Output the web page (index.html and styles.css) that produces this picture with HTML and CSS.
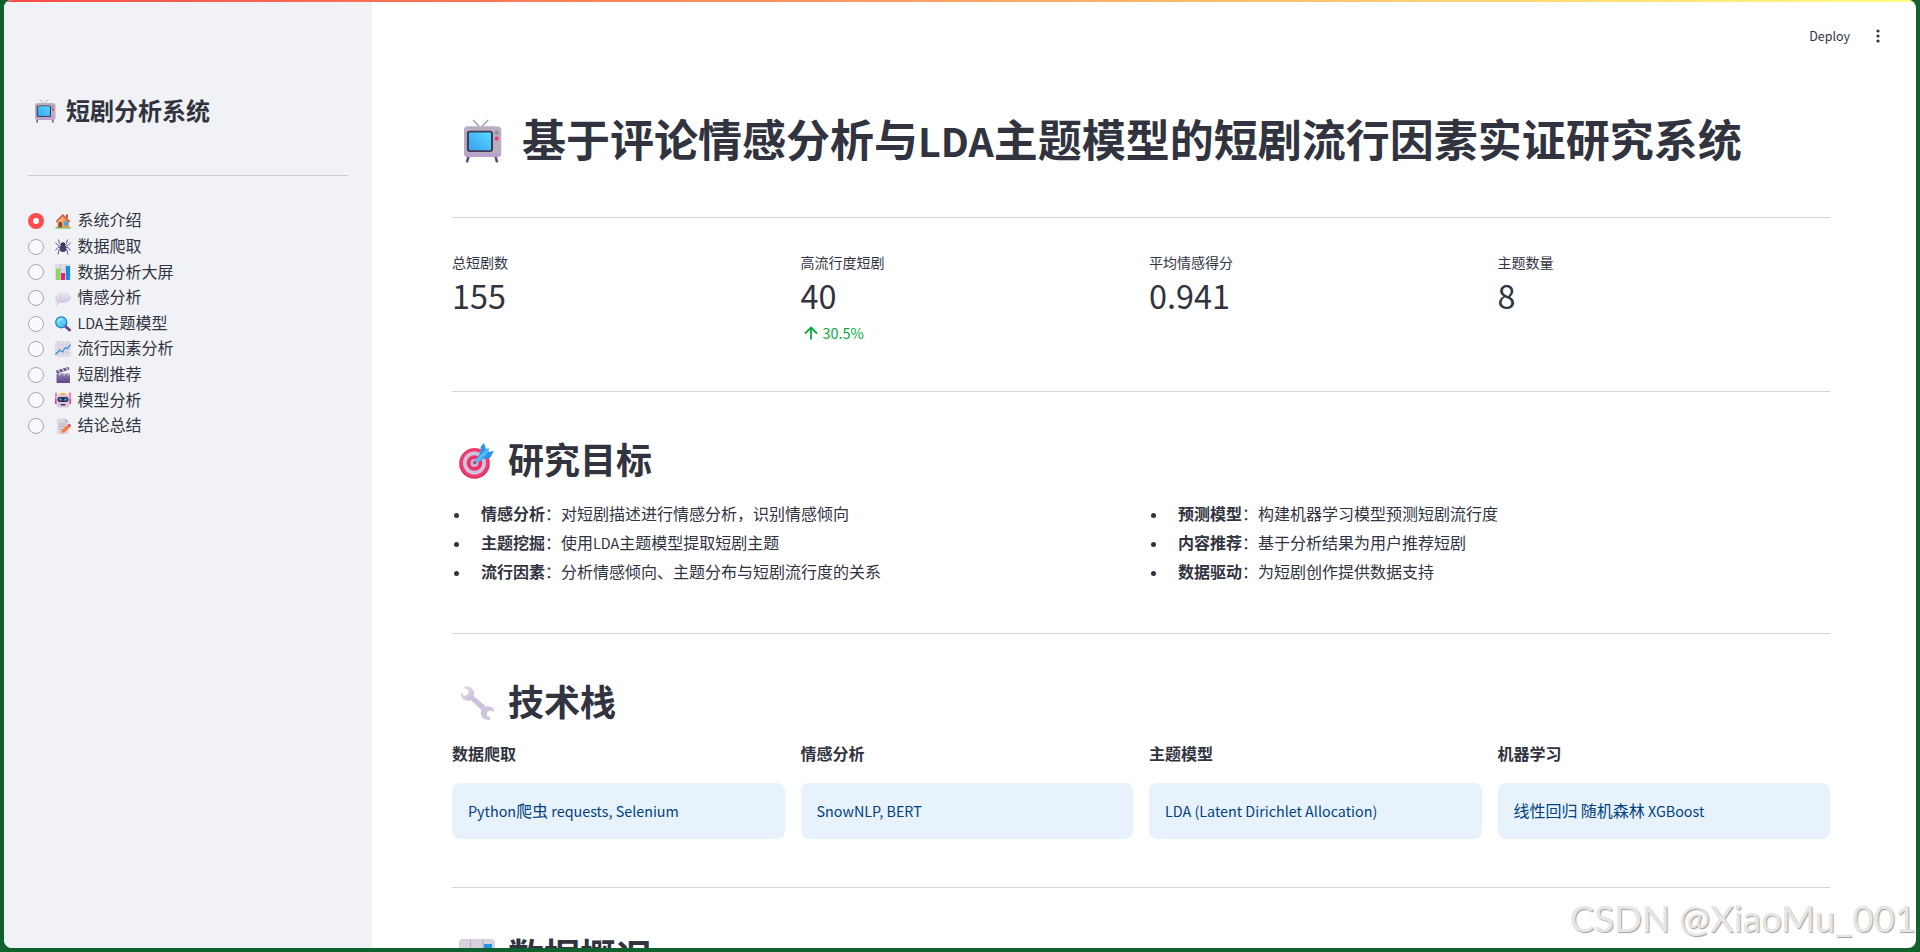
FILE: index.html
```html
<!DOCTYPE html>
<html lang="zh-CN">
<head>
<meta charset="utf-8">
<title>短剧分析系统</title>
<link rel="stylesheet" href="styles.css">
</head>
<body>
<svg class="defs" width="0" height="0" aria-hidden="true">
  <defs>
    <linearGradient id="screen" x1="0" y1="1" x2="1" y2="0"><stop offset="0" stop-color="#3a9df2"/><stop offset="1" stop-color="#55dcff"/></linearGradient>
    <linearGradient id="wrenchFill" x1="0" y1="0" x2="1" y2="1"><stop offset="0" stop-color="#e3dfe6"/><stop offset=".4" stop-color="#cbbbe0"/><stop offset="1" stop-color="#d3cdd9"/></linearGradient>
    <linearGradient id="bubble" x1="0" y1="0" x2="0" y2="1"><stop offset="0" stop-color="#eeeaf1"/><stop offset="1" stop-color="#d3c5e2"/></linearGradient>
    <linearGradient id="lens" x1="0" y1="0" x2="1" y2="1"><stop offset="0" stop-color="#8be8ff"/><stop offset="1" stop-color="#35b8ef"/></linearGradient>
    <linearGradient id="clap" x1="0" y1="0" x2="0" y2="1"><stop offset="0" stop-color="#8e7aaa"/><stop offset="1" stop-color="#5d4a8a"/></linearGradient>
    <symbol id="tv" viewBox="0 0 32 32">
      <path d="M9.500 .8 14.500 6M20.500 .8 15.500 6" fill="none" stroke="#a19ca6" stroke-width="1"/>
      <path d="M6.500 26 5 31.500M25.500 26 27 31.500" fill="none" stroke="#5f4680" stroke-width="1.800"/>
      <rect x="3" y="5.500" width="24.500" height="22" rx="2.500" fill="#b8adc1"/>
      <rect x="3" y="5.500" width="27" height="22" rx="2.500" fill="#b8adc1"/>
      <path d="M3.500 25h26v1q0 1.500-2 1.500H5.500q-2 0-2-1.500z" fill="#bd9fd0"/>
      <rect x="5" y="8.500" width="19" height="15.500" rx="2" fill="#433b52"/>
      <rect x="6.500" y="9.800" width="16" height="13" rx=".8" fill="url(#screen)"/>
      <circle cx="26.700" cy="10" r="1.400" fill="#958a9e"/><circle cx="26.700" cy="14.200" r="1.400" fill="#f8306c"/>
    </symbol>
    <symbol id="house" viewBox="0 0 32 32">
      <path d="M1 28h30v3H1z" fill="#65ba43"/><path d="M4 15 16 6l12 9v14H4z" fill="#f2b37d"/><path d="M16 13h12v16H16z" fill="#e3985e"/>
      <path d="M22 3h4v7h-4z" fill="#c0523c"/><path d="M1 17 14 3q1.500-1.500 3 0l14 14-3 2-13-12L3 19z" fill="#d8623e"/>
      <path d="M7 18h7v11H7z" fill="#8a4935"/><path d="M18 17h8v8h-8z" fill="#3da7e6"/>
    </symbol>
    <symbol id="spider" viewBox="0 0 32 32">
      <g fill="none" stroke="#4b3b64" stroke-width="1.700" stroke-linejoin="round"><path d="M14 14 9 9 7 1M18 14l5-5 2-8M13 15 6 13 1 7M19 15l7-2 5-6M13 18 6 17 1 23M19 18l7-1 5 6M14 20 8 22 6 31M18 20l6 2 2 9"/></g>
      <circle cx="16" cy="11" r="4.500" fill="#3e2d59"/><ellipse cx="16" cy="19" rx="6.500" ry="7" fill="#4c3970"/>
    </symbol>
    <symbol id="bars" viewBox="0 0 32 32">
      <rect x="0" y="0" width="32" height="32" rx="3" fill="#e1dce6"/><path d="M11 0v32M21 0v32M0 11h32M0 21h32" stroke="#bbb1c3"/>
      <path d="M2 9h8v23H2z" fill="#88d85c"/><path d="M12 18h8v14h-8z" fill="#e4236c"/><path d="M22 4h8v28h-8z" fill="#188de0"/>
    </symbol>
    <symbol id="thought" viewBox="0 0 32 32">
      <path d="M7 24q-7 0-7-7 0-4 4-6 0-6 6-7 4-4 9-1 7-1 9 5 5 3 4 8-1 6-7 7-3 4-8 2-5 2-10-1z" fill="url(#bubble)"/><circle cx="6" cy="26" r="2.500" fill="#d6c9e3"/><circle cx="2.500" cy="29.500" r="1.500" fill="#d0c0df"/>
    </symbol>
    <symbol id="magnifier" viewBox="0 0 32 32">
      <path d="m20 20 9 8" stroke="#754084" stroke-width="6" stroke-linecap="round"/><circle cx="12.500" cy="12.500" r="11" fill="url(#lens)" stroke="#247bbd" stroke-width="2.500"/><path d="M6.500 11q2-5 7-5" fill="none" stroke="#c5f7ff" stroke-width="2"/>
    </symbol>
    <symbol id="trend" viewBox="0 0 32 32">
      <rect x="0" y="0" width="32" height="32" rx="3" fill="#e5deeb"/><path d="M8 0v32M16 0v32M24 0v32M0 8h32M0 16h32M0 24h32" stroke="#c4b8cf"/><path d="m1 27 8-9 6 4 6-9 4 2 6-8" fill="none" stroke="#258ddb" stroke-width="2.500"/>
    </symbol>
    <symbol id="clapper" viewBox="0 0 32 32">
      <path d="M3 13h27v17q0 2-2 2H5q-2 0-2-2z" fill="url(#clap)"/><path d="M2 7 27 0l2 5L4 13z" fill="#625078"/><path d="m6 6 4 4M14 4l4 4M22 2l4 4M8 17l4-4M17 17l4-4M26 17l3-4" stroke="#d8cce2" stroke-width="2.500"/><path d="M3 18h27" stroke="#8974ac"/>
    </symbol>
    <symbol id="robot" viewBox="0 0 32 32">
      <path d="M2 1v19M30 1v19" stroke="#ef4776" stroke-width="2.500"/><path d="M0 14h4v10H0zM28 14h4v10h-4z" fill="#e03a74"/>
      <rect x="3" y="4" width="26" height="27" rx="6" fill="#d8c8df"/><path d="M11 2h10l-1 4h-8z" fill="#f5b52e"/><rect x="5" y="10" width="22" height="10" rx="5" fill="#342b4d"/><circle cx="11" cy="15" r="2.500" fill="#31abe4"/><circle cx="21" cy="15" r="2.500" fill="#31abe4"/><rect x="11" y="24" width="10" height="3" rx="1.500" fill="#453556"/>
    </symbol>
    <symbol id="memo" viewBox="0 0 32 32">
      <path d="M4 1h16l7 7v24H4z" fill="#ddd5e1"/><path d="M20 1v7h7z" fill="#b9adbf"/><path d="M8 12h14M8 17h14M8 22h9" stroke="#a69bad" stroke-width="1.500"/>
      <path d="m12 26 13-12 5 5-13 11-6 1z" fill="#fa793c"/><path d="m25 14 2-2q1-1 2 0l3 3-2 4z" fill="#e93e59"/><path d="m12 26 5 4-6 1z" fill="#f5c397"/>
    </symbol>
    <symbol id="target" viewBox="0 0 36 36">
      <circle cx="15.500" cy="20.500" r="15.300" fill="#e02f5e"/><circle cx="15.500" cy="19.800" r="14.500" fill="#ed3d71"/><circle cx="15.500" cy="20" r="11.500" fill="#d2c3dc"/><circle cx="15.500" cy="20" r="7.800" fill="#ed326d"/><circle cx="15.500" cy="20" r="4" fill="#c8b5d1"/><circle cx="15.800" cy="19.500" r="1.800" fill="#766181"/>
      <path d="m16 19 7-7" stroke="#8a7d99" stroke-width="1.500"/><path d="m18 15 3-5 1-7 3-3 2 6 3-1-1 4 6-1-4 7-7 1-4 3z" fill="#3095e8"/><path d="m18 15 10-9 2 2-8 9q-3 3-5 1-1-1 1-3z" fill="#4fc0f5"/>
    </symbol>
    <symbol id="wrench" viewBox="0 0 36 36">
      <path d="M2 7q-1 6 4 8 3 1.500 6 .3L22.500 25q-1.500 4 .5 7 2.500 3.500 8 3l.5-2.500-3.500-2 .3-3.500 3-1.500 3.200 1.500 .5-3q-3.500-3.500-8-2.500L14.500 11q1.500-4-1-7-3-3.500-8-2.500L5 2.500l4.500 3-.5 4-3.500 1.500z" fill="url(#wrenchFill)"/>
    </symbol>
    <symbol id="dashboard" viewBox="0 0 36 36">
      <rect width="36" height="36" rx="4" fill="#d8d1df"/><path d="M11.500 0v36M24 0v36M0 12h36M0 24h36" stroke="#b6aabc"/><path d="M3 13h7v20H3z" fill="#88d85c"/><path d="M14 20h8v13h-8z" fill="#e4236c"/><path d="M25 5h8v28h-8z" fill="#2495e5"/>
    </symbol>
  </defs>
</svg>

<div class="window">
  <div class="decoration"></div>
  <aside class="sidebar">
    <h2 class="brand"><svg class="brand-icon"><use href="#tv"/></svg><span>短剧分析系统</span></h2>
    <hr class="side-rule">
    <nav class="nav">
      <div class="option"><i class="radio checked"></i><svg class="emoji"><use href="#house"/></svg><span>系统介绍</span></div>
      <div class="option"><i class="radio"></i><svg class="emoji"><use href="#spider"/></svg><span>数据爬取</span></div>
      <div class="option"><i class="radio"></i><svg class="emoji"><use href="#bars"/></svg><span>数据分析大屏</span></div>
      <div class="option"><i class="radio"></i><svg class="emoji"><use href="#thought"/></svg><span>情感分析</span></div>
      <div class="option"><i class="radio"></i><svg class="emoji"><use href="#magnifier"/></svg><span><b class="latin">LDA</b>主题模型</span></div>
      <div class="option"><i class="radio"></i><svg class="emoji"><use href="#trend"/></svg><span>流行因素分析</span></div>
      <div class="option"><i class="radio"></i><svg class="emoji"><use href="#clapper"/></svg><span>短剧推荐</span></div>
      <div class="option"><i class="radio"></i><svg class="emoji"><use href="#robot"/></svg><span>模型分析</span></div>
      <div class="option"><i class="radio"></i><svg class="emoji"><use href="#memo"/></svg><span>结论总结</span></div>
    </nav>
  </aside>
  <main class="main">
    <header class="toolbar">
      <span>Deploy</span>
      <svg class="dots" viewBox="0 0 4 14"><circle cx="2" cy="2" r="1.600"/><circle cx="2" cy="7" r="1.600"/><circle cx="2" cy="12" r="1.600"/></svg>
    </header>
    <h1 class="title"><svg class="title-icon"><use href="#tv"/></svg><span>基于评论情感分析与<b class="latin">LDA</b>主题模型的短剧流行因素实证研究系统</span></h1>
    <hr class="rule">
    <section class="columns metrics">
      <div><div class="metric-label">总短剧数</div><div class="metric-value">155</div></div>
      <div><div class="metric-label">高流行度短剧</div><div class="metric-value">40</div>
        <div class="delta"><svg class="arrow" viewBox="0 0 14 14"><path d="M7 13.500V1.500M1 7.500l6-6 6 6"/></svg><span>30.5%</span></div></div>
      <div><div class="metric-label">平均情感得分</div><div class="metric-value">0.941</div></div>
      <div><div class="metric-label">主题数量</div><div class="metric-value">8</div></div>
    </section>
    <hr class="rule">
    <h2 class="heading"><svg class="heading-icon"><use href="#target"/></svg><span>研究目标</span></h2>
    <section class="goals">
      <ul>
        <li><span><strong>情感分析</strong>：对短剧描述进行情感分析，识别情感倾向</span></li>
        <li><span><strong>主题挖掘</strong>：使用<b class="latin">LDA</b>主题模型提取短剧主题</span></li>
        <li><span><strong>流行因素</strong>：分析情感倾向、主题分布与短剧流行度的关系</span></li>
      </ul>
      <ul>
        <li><span><strong>预测模型</strong>：构建机器学习模型预测短剧流行度</span></li>
        <li><span><strong>内容推荐</strong>：基于分析结果为用户推荐短剧</span></li>
        <li><span><strong>数据驱动</strong>：为短剧创作提供数据支持</span></li>
      </ul>
    </section>
    <hr class="rule">
    <h2 class="heading"><svg class="heading-icon"><use href="#wrench"/></svg><span>技术栈</span></h2>
    <section class="columns stack">
      <div><strong class="stack-label">数据爬取</strong><div class="info"><b class="latin">Python</b>爬虫<b class="latin"> requests, Selenium</b></div></div>
      <div><strong class="stack-label">情感分析</strong><div class="info"><b class="latin">SnowNLP, BERT</b></div></div>
      <div><strong class="stack-label">主题模型</strong><div class="info"><b class="latin">LDA (Latent Dirichlet Allocation)</b></div></div>
      <div><strong class="stack-label">机器学习</strong><div class="info">线性回归<b class="latin"> </b>随机森林<b class="latin"> XGBoost</b></div></div>
    </section>
    <hr class="rule">
    <h2 class="heading"><svg class="heading-icon"><use href="#dashboard"/></svg><span>数据概况</span></h2>
  </main>
</div>
<div class="watermark">CSDN @XiaoMu_001</div>
</body>
</html>
```
FILE: styles.css
```css
* { box-sizing: border-box; }

html, body {
  margin: 0;
  height: 952px;
  overflow: hidden;
}

body {
  padding: 0 4px 4px;
  background: #0f622e;
  color: #31333f;
  font-family: "Noto Sans CJK SC", sans-serif;
  font-size: 16px;
}

svg { display: block; flex: none; }
.defs { position: absolute; }
h1, h2, ul { margin: 0; padding: 0; }
span, li, .info, strong { white-space: nowrap; }

/* Latin runs are set slightly smaller than the Chinese text beside them */
.latin {
  font-size: .896em;
  font-weight: inherit;
  line-height: 1;
}

.window {
  position: relative;
  display: flex;
  height: 948px;
  overflow: hidden;
  border-radius: 8px;
  background: #fff;
}

.decoration {
  position: absolute;
  inset: 0 0 auto;
  height: 2px;
  background: linear-gradient(90deg, #ff4b4b, #fffd80);
}

.sidebar {
  flex: none;
  width: 368px;
  padding: 93px 24px 0;
  background: #f0f2f6;
}

.brand {
  display: flex;
  align-items: center;
  height: 36px;
  padding-left: 5px;
  gap: 9px;
  font-size: 24px;
  line-height: 36px;
  font-weight: 600;
}

.brand span { padding-bottom: 2px; }
.brand-icon { width: 24px; height: 24px; }

.side-rule {
  margin: 46px 0 32.4px;
  border: 0;
  border-top: 1px solid #cccdd3;
}

.option {
  display: flex;
  align-items: center;
  height: 25.6px;
  line-height: 25.6px;
}

.option span { padding-bottom: 2px; }

.radio {
  flex: none;
  width: 16px;
  height: 16px;
  margin-right: 11px;
  border: 1px solid #a3a8b4;
  border-radius: 50%;
  background: #fafafc;
}

.radio.checked { border: 5px solid #ff4b4b; background: #fff; }
.emoji { width: 16px; height: 16px; margin-right: 6.4px; }

.main {
  flex: 1;
  min-width: 0;
  padding: 0 86px 0 80px;
}

.toolbar {
  display: flex;
  align-items: center;
  justify-content: flex-end;
  height: 60px;
  margin-right: -50px;
  padding-top: 12px;
  gap: 26px;
  font-size: 12.5px;
}

.toolbar span { padding-bottom: 2px; }
.dots { width: 4px; height: 14px; fill: #31333f; }

.title {
  display: flex;
  align-items: center;
  height: 54px;
  margin: 54px 0 49px;
  padding-left: 8px;
  gap: 18px;
  font-size: 44px;
  line-height: 54px;
  font-weight: 700;
}

.title span { padding-bottom: 7px; }
.title-icon { width: 44px; height: 44px; }

.rule {
  margin: 0;
  border: 0;
  border-top: 1px solid #d6d6d9;
}

.columns {
  display: grid;
  grid-template-columns: repeat(4, 1fr);
  gap: 16px;
}

.metrics { height: 173px; padding-top: 33px; }
.metric-label { font-size: 14px; line-height: 22px; }
.metric-value { font-size: 32.4px; line-height: 44px; }

.delta {
  display: flex;
  align-items: center;
  gap: 5px;
  margin-top: 3px;
  padding-left: 3px;
  color: #09ab3b;
  font-size: 14.4px;
  line-height: 26px;
}

.arrow {
  width: 14px;
  height: 14px;
  fill: none;
  stroke: #09ab3b;
  stroke-width: 1.8;
}

.heading {
  display: flex;
  align-items: center;
  height: 44px;
  margin-top: 47px;
  padding-left: 7px;
  gap: 13px;
  font-size: 36px;
  line-height: 44px;
  font-weight: 600;
}

.heading span { padding-bottom: 6px; }
.heading-icon { width: 36px; height: 36px; }

.goals {
  display: grid;
  grid-template-columns: 1fr 1fr;
  gap: 16px;
  height: 150px;
  padding-top: 16px;
}

.goals li {
  display: flex;
  align-items: center;
  height: 29px;
}

.goals li span { padding-bottom: 2px; }

.goals li::before {
  content: "";
  width: 5px;
  height: 5px;
  margin: 3px 22px 0 2px;
  border-radius: 50%;
  background: #31333f;
}

.stack { height: 162px; padding-top: 16px; }
.stack-label { display: block; height: 24px; line-height: 24px; font-weight: 600; }

.info {
  height: 56px;
  margin-top: 18px;
  padding: 0 16px;
  border-radius: 8px;
  background: #e8f2fc;
  color: #004280;
  line-height: 55px;
}

.watermark {
  position: absolute;
  right: 4px;
  bottom: 12px;
  color: #e6e6e6;
  font-family: Lato, sans-serif;
  font-size: 36.7px;
  line-height: 44px;
  white-space: nowrap;
  text-shadow: 1px 1px 1px #a0a0a0;
}
```
